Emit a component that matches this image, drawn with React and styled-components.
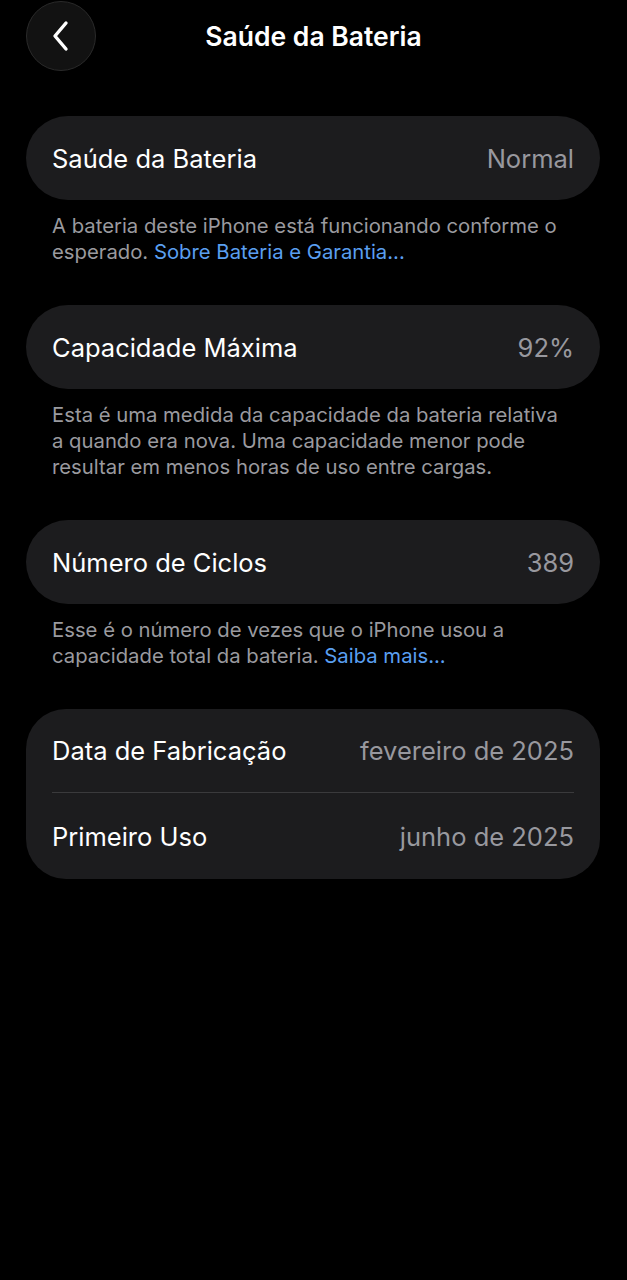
import React from "react";
import styled, { createGlobalStyle } from "styled-components";

const GlobalStyle = createGlobalStyle`
  html, body {
    margin: 0;
    padding: 0;
    background: #000;
  }
  body {
    font-family: Inter, "Noto Sans", "Liberation Sans", sans-serif;
    -webkit-font-smoothing: antialiased;
  }
`;

const Page = styled.div`
  min-height: 1280px;
  background: #000;
  color: #fff;
`;

const Header = styled.header`
  position: relative;
  height: 72px;
  display: flex;
  align-items: center;
  justify-content: center;
`;

const BackButton = styled.button`
  position: absolute;
  left: 26px;
  top: 1px;
  width: 70px;
  height: 70px;
  border-radius: 50%;
  background: #121212;
  border: 1px solid #2a2a2a;
  display: flex;
  align-items: center;
  justify-content: center;
  padding: 0;
  cursor: pointer;
`;

const Title = styled.h1`
  margin: 0;
  font-size: 26.5px;
  font-weight: 600;
  letter-spacing: 0;
  color: #fff;
`;

const Content = styled.main`
  padding: 44px 27px 0 26px;
`;

const Card = styled.div`
  background: #1c1c1e;
  border-radius: ${({ $radius }) => $radius || 42}px;
  padding: 0 26px;
`;

const Row = styled.div`
  height: ${({ $h }) => $h || 84}px;
  display: flex;
  align-items: center;
  justify-content: space-between;
  font-size: 25.5px;
  border-top: ${({ $divider }) => ($divider ? "1px solid #3a3a3c" : "none")};
`;

const Label = styled.span`
  color: #fff;
`;

const Value = styled.span`
  color: #98989e;
`;

const Footnote = styled.div`
  margin: 13px 0 40px;
  padding: 0 26px;
  font-size: 20.3px;
  line-height: 26px;
  color: #9a9a9f;
`;

const Link = styled.span`
  color: #5a9ff0;
`;

const ChevronLeft = () => (
  <svg width="22" height="32" viewBox="0 0 22 32" fill="none">
    <path
      d="M16 3 L5 16 L16 29"
      stroke="#fff"
      strokeWidth="3.4"
      strokeLinecap="round"
      strokeLinejoin="round"
    />
  </svg>
);

const App = () => {
  return (
    <>
      <GlobalStyle />
      <Page>
        <Header>
          <BackButton aria-label="Voltar">
            <ChevronLeft />
          </BackButton>
          <Title>Saúde da Bateria</Title>
        </Header>
        <Content>
          <Card>
            <Row>
              <Label>Saúde da Bateria</Label>
              <Value>Normal</Value>
            </Row>
          </Card>
          <Footnote>
            A bateria deste iPhone está funcionando conforme o esperado.{" "}
            <Link>Sobre Bateria e Garantia...</Link>
          </Footnote>

          <Card>
            <Row>
              <Label>Capacidade Máxima</Label>
              <Value>92%</Value>
            </Row>
          </Card>
          <Footnote>
            Esta é uma medida da capacidade da bateria relativa a quando era
            nova. Uma capacidade menor pode resultar em menos horas de uso entre
            cargas.
          </Footnote>

          <Card>
            <Row>
              <Label>Número de Ciclos</Label>
              <Value>389</Value>
            </Row>
          </Card>
          <Footnote>
            Esse é o número de vezes que o iPhone usou a capacidade total da
            bateria. <Link>Saiba mais...</Link>
          </Footnote>

          <Card $radius={40}>
            <Row $h={83}>
              <Label>Data de Fabricação</Label>
              <Value>fevereiro de 2025</Value>
            </Row>
            <Row $h={86} $divider>
              <Label>Primeiro Uso</Label>
              <Value>junho de 2025</Value>
            </Row>
          </Card>
        </Content>
      </Page>
    </>
  );
};

export default App;
